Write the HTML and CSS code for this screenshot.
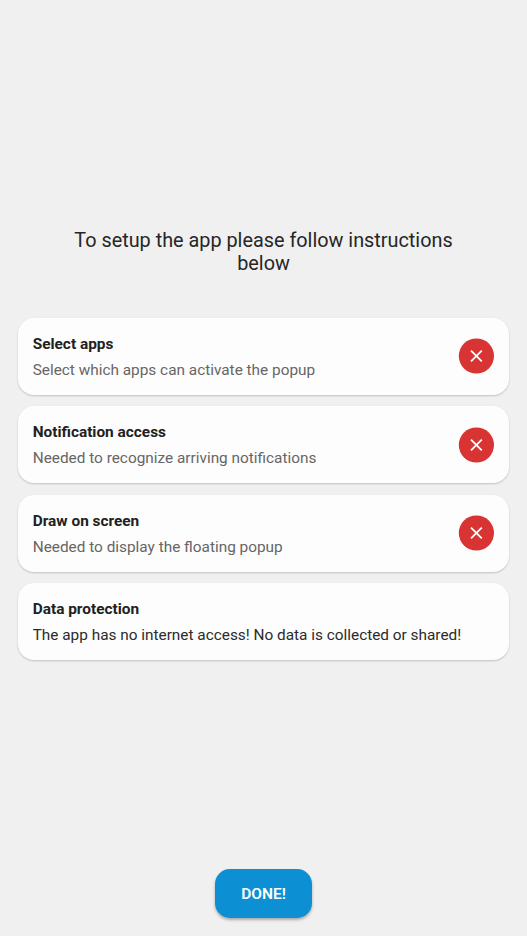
FILE: index.html
```html
<!DOCTYPE html>
<html lang="en">
<head>
<meta charset="utf-8">
<title>Setup</title>
<link rel="stylesheet" href="styles.css">
</head>
<body>
<main class="screen">
  <h1 class="title">To setup the app please follow instructions below</h1>
  <section class="cards">
    <article class="card">
      <div class="card-text"><h2>Select apps</h2><p>Select which apps can activate the popup</p></div>
      <svg class="status" viewBox="0 0 36 36"><circle cx="18.4" cy="18" r="17.6"/><path d="M13 12.6l10.8 10.8M23.8 12.6L13 23.4"/></svg>
    </article>
    <article class="card">
      <div class="card-text"><h2>Notification access</h2><p>Needed to recognize arriving notifications</p></div>
      <svg class="status" viewBox="0 0 36 36"><circle cx="18.4" cy="18" r="17.6"/><path d="M13 12.6l10.8 10.8M23.8 12.6L13 23.4"/></svg>
    </article>
    <article class="card">
      <div class="card-text"><h2>Draw on screen</h2><p>Needed to display the floating popup</p></div>
      <svg class="status" viewBox="0 0 36 36"><circle cx="18.4" cy="18" r="17.6"/><path d="M13 12.6l10.8 10.8M23.8 12.6L13 23.4"/></svg>
    </article>
    <article class="card">
      <div class="card-text"><h2>Data protection</h2><p class="strong">The app has no internet access! No data is collected or shared!</p></div>
    </article>
  </section>
  <button class="done">DONE!</button>
</main>
</body>
</html>
```
FILE: styles.css
```css
* { box-sizing: border-box; }
body { margin: 0; background: #f0f0f0; font-family: Roboto, sans-serif; color: #262626; }
.screen { height: 936px; padding: 229px 17.7px 18px 17.7px; display: flex; flex-direction: column; align-items: center; }
.title { width: 401px; margin: 0; font-size: 19.83px; line-height: 23px; font-weight: 400; text-align: center; }
.cards { width: 100%; margin-top: 42.6px; display: flex; flex-direction: column; gap: 11.5px; }
.card { height: 77px; padding: 0 15px; display: flex; align-items: center; justify-content: space-between; background: #fdfdfd; border-radius: 16px; box-shadow: 0 1px 2px rgba(0, 0, 0, 0.2); }
.card-text { padding-top: 2.6px; }
.card h2 { margin: 0; font-size: 15.4px; line-height: 20px; font-weight: 700; color: #212121; }
.card p { margin: 5px 0 0; font-size: 15.37px; line-height: 22px; color: #666; white-space: nowrap; }
.card .strong { color: #2b2b2b; }
.status { width: 36px; height: 36px; flex: none; }
.status circle { fill: #d93434; }
.status path { fill: none; stroke: #fff; stroke-width: 1.8; }
.done { width: 97px; height: 49px; margin: auto 0 0; padding: 1px 0 0; border: 0; border-radius: 15px; background: #0c8fd3; color: #fff; font: 600 15.5px/20px Roboto, sans-serif; box-shadow: 0 2px 3px rgba(0, 0, 0, 0.3); }
```
